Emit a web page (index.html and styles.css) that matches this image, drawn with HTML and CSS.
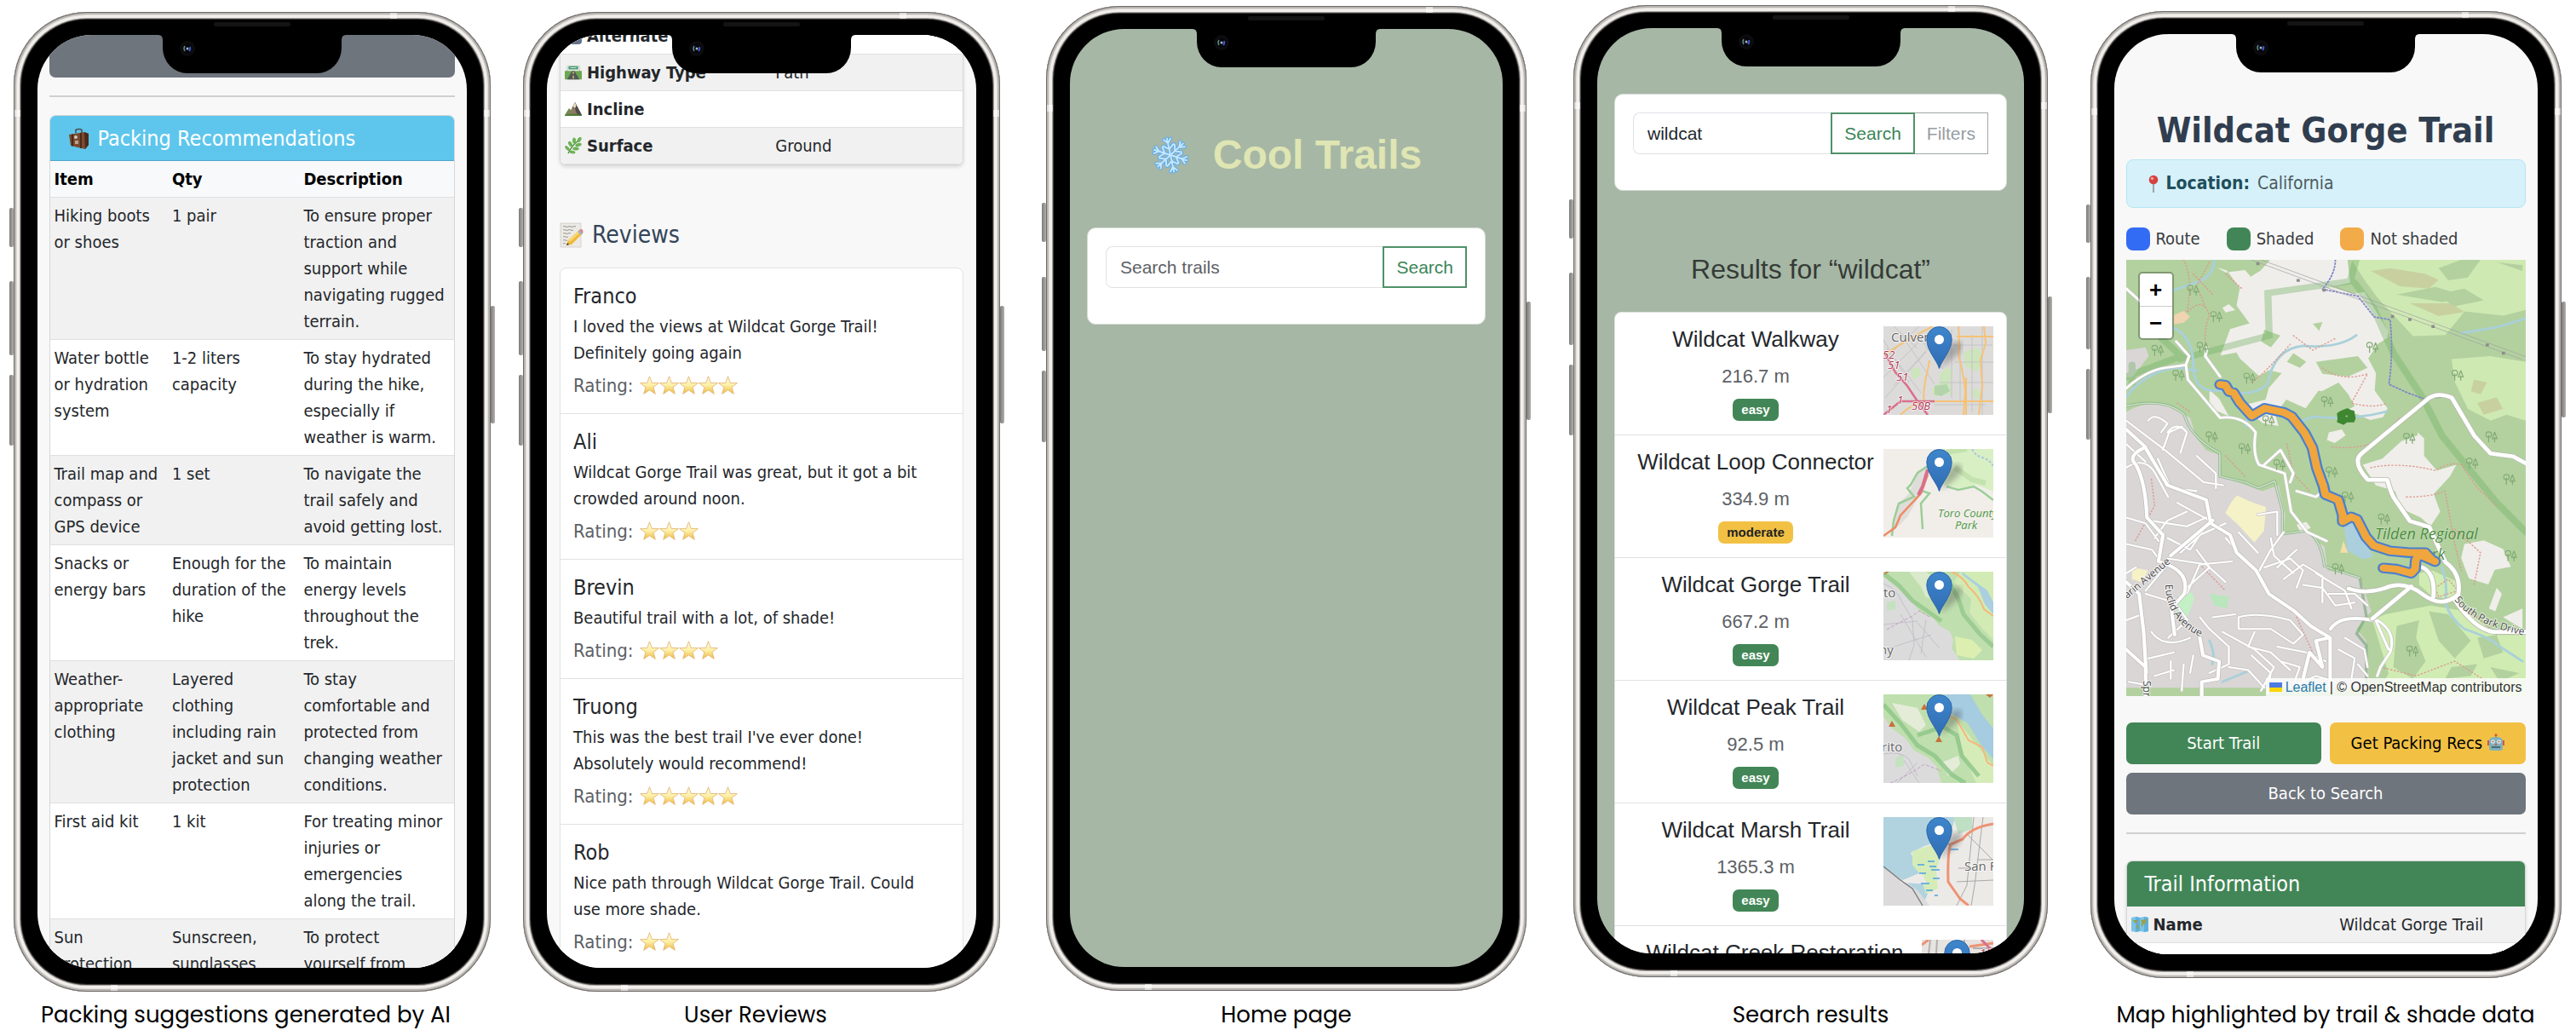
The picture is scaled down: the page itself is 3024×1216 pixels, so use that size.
FILE: index.html
```html
<!DOCTYPE html>
<html lang="en">
<head>
<meta charset="utf-8">
<meta name="viewport" content="width=device-width, initial-scale=1">
<title>Cool Trails – screens</title>
<link rel="stylesheet" href="styles.css">
</head>
<body>
<svg class="sprite" aria-hidden="true">
  <defs>
    <linearGradient id="gold" x1="0" y1="0" x2="0" y2="1"><stop offset="0" stop-color="#fffbe6"/><stop offset=".5" stop-color="#fdf0a8"/><stop offset="1" stop-color="#f0b83c"/></linearGradient>
    <linearGradient id="pinblue" x1="0" y1="0" x2="0" y2="1"><stop offset="0" stop-color="#3f86cb"/><stop offset="1" stop-color="#2f6cb4"/></linearGradient>
    <filter id="soft"><feGaussianBlur stdDeviation="3"/></filter>
  </defs>
  <symbol id="star" viewBox="0 0 24 24"><path d="M12 .8l2.900 8 8.500.2-6.700 5.100 2.400 8.200L12 17.600l-7.100 4.700 2.400-8.200L.6 9l8.500-.2z" fill="url(#gold)" stroke="#e2b473" stroke-width=".9" stroke-linejoin="round"/></symbol>
  <symbol id="pin" viewBox="0 0 44 50">
    <path d="M17 49 L24 27 Q34 14 42 20 Q43 29 33 36z" fill="#444" opacity=".35" filter="url(#soft)"/>
    <path d="M15.500 49.500C13 40 1 29 .8 15.500A14.700 15 0 0 1 30.200 15.500C30 29 18 40 15.500 49.500z" fill="url(#pinblue)" stroke="#2c65a8"/>
    <circle cx="15.500" cy="15.500" r="5.500" fill="#fff"/>
  </symbol>
  <symbol id="notch" viewBox="0 0 222 72">
    <path d="M0 27h1q5 0 5 6v9a29 30 0 0 0 29 30h152a29 30 0 0 0 29-30v-9q0-6 5-6h1V20H0z"/>
    <rect x="66" y="12" width="90" height="5" rx="2" fill="#141414"/>
    <circle cx="35" cy="43" r="9" fill="#0c0c0f"/><circle cx="35" cy="43" r="5.500" fill="#05070b"/>
    <path d="M32 40q-2 3 0 6" stroke="#5f8a86" stroke-width="1.500" fill="none"/><path d="M38 41q1 3-1 5" stroke="#3d55c0" stroke-width="2" fill="none"/><circle cx="35" cy="43" r="1.500" fill="#a9b6c4"/>
  </symbol>
  <symbol id="luggage" viewBox="0 0 26 26"><path d="M9 6V2.500Q13 .5 16 2.500V6" fill="none" stroke="#4c4a48" stroke-width="1.500"/><path d="M1 8l18-3 5 2v13l-4 5-17-4z" fill="#7a4a30"/><path d="M19 5l5 2v13l-4 5z" fill="#4b2a1b"/><path d="M5 7.500v14M15 6v18" stroke="#3c2116" stroke-width="1.500"/><rect x="7" y="9" width="4" height="4" rx="2" fill="#cfc9be"/><rect x="8" y="15" width="4" height="4" fill="#b9a48e"/></symbol>
  <symbol id="highway" viewBox="0 0 22 18"><path d="M0 7h22v11H0z" fill="#6aa84f"/><path d="M9.500 7h3L19 18H3z" fill="#54585a"/><path d="M11 8v3M11 13v4" stroke="#e8d56a" stroke-width="1.300"/><path d="M3 8V3h16v5" stroke="#8b8f8d" fill="none"/><rect x="2" y="0" width="18" height="6" fill="#d9ddd8"/><rect x="5" y="1" width="12" height="4" fill="#3f9a70"/><path d="M7 3h8" stroke="#dff3e8"/></symbol>
  <symbol id="mountain" viewBox="0 0 20 16"><path d="M0 15L5 7l4 5 2 4H0z" fill="#6f8a52"/><path d="M4 15L12 0l8 15z" fill="#8d7a62"/><path d="M12 0L9 6l3 1 1 4 2 4h5z" fill="#4f4b49"/><path d="M12 0l-2.500 5 2.500 2 1.500-3z" fill="#e9dcc2"/><path d="M0 15q10-3 20 0v1H0z" fill="#4d7a36"/></symbol>
  <symbol id="herb" viewBox="0 0 20 20"><path d="M4 19Q8 10 16 4" stroke="#4d8c3a" stroke-width="1.400" fill="none"/><g fill="#6db356"><ellipse cx="17" cy="3" rx="2" ry="3.500" transform="rotate(35 17 3)"/><ellipse cx="11" cy="4" rx="2" ry="3.500"/><ellipse cx="6.500" cy="8" rx="2" ry="3.500" transform="rotate(-30 6.500 8)"/><ellipse cx="3" cy="13" rx="1.800" ry="3.500" transform="rotate(-45 3 13)"/><ellipse cx="16" cy="9" rx="2" ry="3.800" transform="rotate(75 16 9)"/><ellipse cx="13" cy="13.500" rx="2" ry="3.800" transform="rotate(95 13 13.500)"/><ellipse cx="9" cy="17.500" rx="1.800" ry="3.500" transform="rotate(100 9 17.500)"/></g></symbol>
  <symbol id="abc" viewBox="0 0 20 20"><rect width="20" height="20" rx="4" fill="#62708a"/><path d="M5 13l3-7 3 7M6 11h4" stroke="#fff" stroke-width="1.500" fill="none"/></symbol>
  <symbol id="memo" viewBox="0 0 28 30"><path d="M1 1h24v28H1z" fill="#eceae5" stroke="#cfccc6" stroke-width=".8"/><path d="M4 5q2-1 3 0t3 0 3 0 3 0 3 0M4 9q2-1 3 0t3 0 3 0 3 0M4 13q2-1 3 0t3 0 3 0M4 17q2-1 3 0t3 0M4 21q2-1 3 0t2 0M4 25q1-1 3 0" stroke="#8a8883" stroke-width=".9" fill="none"/><path d="M8 27l2-6L23 9l4 4-13 13z" fill="#f0b93c"/><path d="M10 21L23 9l2 2-13 12z" fill="#f9d772"/><path d="M21 11l2.500-2.500 4 4L25 15z" fill="#9fb6c4"/><path d="M23 9q3-2 4 0t0 4z" fill="#e77d80"/><path d="M8 27l1-3 2 2z" fill="#333"/></symbol>
  <symbol id="snow" viewBox="0 0 46 46"><g transform="rotate(-12 23 23)"><g stroke="#5faae8" stroke-width="4" stroke-linecap="round" fill="none"><g id="arm"><path d="M23 22V3M23 9l-4-5M23 9l4-5M23 16l-6-5M23 16l6-5"/></g><use href="#arm" transform="rotate(60 23 23)"/><use href="#arm" transform="rotate(120 23 23)"/><use href="#arm" transform="rotate(180 23 23)"/><use href="#arm" transform="rotate(240 23 23)"/><use href="#arm" transform="rotate(300 23 23)"/></g><g stroke="#c3e6fd" stroke-width="2" stroke-linecap="round" fill="none"><g id="arm2"><path d="M23 22V3M23 9l-4-5M23 9l4-5M23 16l-6-5M23 16l6-5"/></g><use href="#arm2" transform="rotate(60 23 23)"/><use href="#arm2" transform="rotate(120 23 23)"/><use href="#arm2" transform="rotate(180 23 23)"/><use href="#arm2" transform="rotate(240 23 23)"/><use href="#arm2" transform="rotate(300 23 23)"/></g></g></symbol>
  <symbol id="pushpin" viewBox="0 0 12 22"><path d="M6 9v12" stroke="#8c9294" stroke-width="1.600"/><circle cx="6" cy="6" r="5.300" fill="#d5423f"/><circle cx="4.500" cy="4.500" r="1.800" fill="#f0a09c"/></symbol>
  <symbol id="robot" viewBox="0 0 20 20"><circle cx="10" cy="1.800" r="1.600" fill="#d9543f"/><path d="M10 3v3" stroke="#777"/><rect x="0" y="8" width="3" height="6" fill="#d9543f"/><rect x="17" y="8" width="3" height="6" fill="#d9543f"/><path d="M2 8q1-4 8-4t8 4v9q0 3-3 3H5q-3 0-3-3z" fill="#7fb0bb"/><circle cx="6.500" cy="9.500" r="2.300" fill="#dff6fb"/><circle cx="13.500" cy="9.500" r="2.300" fill="#dff6fb"/><circle cx="6.500" cy="9.500" r="1" fill="#c0503c"/><circle cx="13.500" cy="9.500" r="1" fill="#c0503c"/><path d="M10 11l-1.500 3h3z" fill="#c8563e"/><path d="M5 16h10" stroke="#35545c" stroke-width="2" stroke-dasharray="1.500 .6"/></symbol>
  <symbol id="world" viewBox="0 0 20 18"><path d="M0 1l5-1 5 1 5-1 5 1v16l-5 1-5-1-5 1-5-1z" fill="#7cc3e8"/><path d="M5 0l5 1v16l-5 1zM15 0l5 1v16l-5 1z" fill="#5fafdb"/><path d="M2 4h6l-2 4-2-1zM6 9l3 2-2 5zM11 4l7-1-1 5-4 1zM11 8h3l-1 5z" fill="#97a24b"/></symbol>
  <symbol id="tree" viewBox="0 0 36 40"><g fill="none" stroke="#84ab76" stroke-width="3"><circle cx="9" cy="11" r="8"/><path d="M9 14v20M26 4l-7 20h14zM26 20v14"/></g></symbol>
</svg>

<main class="showcase">

  <figure class="device device-packing">
    <div class="phone">
      <span class="key key-mute"></span><span class="key key-up"></span><span class="key key-down"></span><span class="key key-power"></span>
      <span class="band band-top"></span><span class="band band-left"></span><span class="band band-right"></span><span class="band band-bottom"></span>
      <section class="screen trail">
        <button class="btn btn-grey btn-tail" type="button" aria-label="Back to Search"></button>
        <hr>
        <div class="card">
          <h2 class="card-head head-info"><svg class="ico26"><use href="#luggage"/></svg>Packing Recommendations</h2>
          <table class="tbl tbl-pack">
            <colgroup><col class="c-item"><col class="c-qty"><col></colgroup>
            <thead><tr><th scope="col">Item</th><th scope="col">Qty</th><th scope="col">Description</th></tr></thead>
            <tbody>
              <tr><td>Hiking boots or shoes</td><td>1 pair</td><td>To ensure proper traction and support while navigating rugged terrain.</td></tr>
              <tr><td>Water bottle or hydration system</td><td>1-2 liters capacity</td><td>To stay hydrated during the hike, especially if weather is warm.</td></tr>
              <tr><td>Trail map and compass or GPS device</td><td>1 set</td><td>To navigate the trail safely and avoid getting lost.</td></tr>
              <tr><td>Snacks or energy bars</td><td>Enough for the duration of the hike</td><td>To maintain energy levels throughout the trek.</td></tr>
              <tr><td>Weather-appropriate clothing</td><td>Layered clothing including rain jacket and sun protection</td><td>To stay comfortable and protected from changing weather conditions.</td></tr>
              <tr><td>First aid kit</td><td>1 kit</td><td>For treating minor injuries or emergencies along the trail.</td></tr>
              <tr><td>Sun protection</td><td>Sunscreen, sunglasses</td><td>To protect<br>yourself from</td></tr>
            </tbody>
          </table>
        </div>
      </section>
      <svg class="notch"><use href="#notch"/></svg>
    </div>
    <figcaption>Packing suggestions generated by AI</figcaption>
  </figure>

  <figure class="device device-reviews">
    <div class="phone">
      <span class="key key-mute"></span><span class="key key-up"></span><span class="key key-down"></span><span class="key key-power"></span>
      <span class="band band-top"></span><span class="band band-left"></span><span class="band band-right"></span><span class="band band-bottom"></span>
      <section class="screen trail">
        <div class="card card-info scrolled">
          <table class="tbl tbl-info">
            <colgroup><col class="c-key"><col></colgroup>
            <tbody>
              <tr class="plain"><th scope="row"><svg class="ico20"><use href="#abc"/></svg>Alternate Name</th><td></td></tr>
              <tr class="tint"><th scope="row"><svg class="ico20"><use href="#highway"/></svg>Highway Type</th><td>Path</td></tr>
              <tr class="plain"><th scope="row"><svg class="ico20"><use href="#mountain"/></svg>Incline</th><td></td></tr>
              <tr class="tint"><th scope="row"><svg class="ico20"><use href="#herb"/></svg>Surface</th><td>Ground</td></tr>
            </tbody>
          </table>
        </div>
        <h2 class="reviews-title"><svg class="ico28"><use href="#memo"/></svg>Reviews</h2>
        <ul class="reviews">
          <li><h3>Franco</h3><p>I loved the views at Wildcat Gorge Trail! Definitely going again</p><div class="rating">Rating: <span class="stars" role="img" aria-label="5 stars"><svg><use href="#star"/></svg><svg><use href="#star"/></svg><svg><use href="#star"/></svg><svg><use href="#star"/></svg><svg><use href="#star"/></svg></span></div></li>
          <li><h3>Ali</h3><p>Wildcat Gorge Trail was great, but it got a bit crowded around noon.</p><div class="rating">Rating: <span class="stars" role="img" aria-label="3 stars"><svg><use href="#star"/></svg><svg><use href="#star"/></svg><svg><use href="#star"/></svg></span></div></li>
          <li><h3>Brevin</h3><p>Beautiful trail with a lot, of shade!</p><div class="rating">Rating: <span class="stars" role="img" aria-label="4 stars"><svg><use href="#star"/></svg><svg><use href="#star"/></svg><svg><use href="#star"/></svg><svg><use href="#star"/></svg></span></div></li>
          <li><h3>Truong</h3><p>This was the best trail I've ever done! Absolutely would recommend!</p><div class="rating">Rating: <span class="stars" role="img" aria-label="5 stars"><svg><use href="#star"/></svg><svg><use href="#star"/></svg><svg><use href="#star"/></svg><svg><use href="#star"/></svg><svg><use href="#star"/></svg></span></div></li>
          <li><h3>Rob</h3><p>Nice path through Wildcat Gorge Trail. Could use more shade.</p><div class="rating">Rating: <span class="stars" role="img" aria-label="2 stars"><svg><use href="#star"/></svg><svg><use href="#star"/></svg></span></div></li>
        </ul>
      </section>
      <svg class="notch"><use href="#notch"/></svg>
    </div>
    <figcaption>User Reviews</figcaption>
  </figure>

  <figure class="device device-home">
    <div class="phone">
      <span class="key key-mute"></span><span class="key key-up"></span><span class="key key-down"></span><span class="key key-power"></span>
      <span class="band band-top"></span><span class="band band-left"></span><span class="band band-right"></span><span class="band band-bottom"></span>
      <section class="screen finder">
        <h1 class="brand"><svg class="ico46"><use href="#snow"/></svg>Cool Trails</h1>
        <form class="search-card">
          <label class="sr-only" for="q-home">Search trails</label>
          <div class="group"><input id="q-home" type="text" placeholder="Search trails"><button class="gbtn gbtn-green" type="button">Search</button></div>
        </form>
      </section>
      <svg class="notch"><use href="#notch"/></svg>
    </div>
    <figcaption>Home page</figcaption>
  </figure>

  <figure class="device device-results">
    <div class="phone">
      <span class="key key-mute"></span><span class="key key-up"></span><span class="key key-down"></span><span class="key key-power"></span>
      <span class="band band-top"></span><span class="band band-left"></span><span class="band band-right"></span><span class="band band-bottom"></span>
      <section class="screen finder">
        <form class="search-card">
          <label class="sr-only" for="q-results">Search trails</label>
          <div class="group"><input id="q-results" type="text" value="wildcat"><button class="gbtn gbtn-green" type="button">Search</button><button class="gbtn gbtn-mute" type="button">Filters</button></div>
        </form>
        <h2 class="results-title">Results for “wildcat”</h2>
        <ul class="results">
          <li>
            <div class="hit"><h3>Wildcat Walkway</h3><p>216.7 m</p><span class="badge easy">easy</span></div>
            <svg class="thumb" viewBox="0 0 129 104">
              <rect width="129" height="104" fill="#dcdbda"/>
              <g fill="#cde5bb"><path d="M94 30l18-5 4 12-6 16-14-6zM66 56l10-8 6 6-4 10 2 16-20 2-4-8 10-8zM32 50l10-2 2 10-10 4zM104 76l6-4 4 10-8 4z"/></g>
              <path d="M60 70l14-2 4 8-10 6-8-2z" fill="#b3d3ab"/>
              <g stroke="#c4c4c6" fill="none"><path d="M0 40L42 0M0 60L56 4M12 70L60 18M2 84L50 30M20 8l40 60M4 26l40 52M40 10l30 40M0 16l30 50M70 0v30M80 4v80M68 22h60M84 42h45M104 10v90M66 66h63M60 92h60M90 20v70M116 0v104M12 0l28 26"/></g>
              <g stroke="#f6c277" stroke-width="2" fill="none"><path d="M0 34Q30 14 58 0M86 12h43M88 0q2 22 0 34 6 20 8 42l-2 28M118 0l2 20-6 20 2 30-4 34M50 60q-4 20-2 28M54 40q-2 14-5 22M54 88h75M20 104q14-14 30-16M97 60v44"/></g>
              <g stroke="#d9708a" stroke-width="2.500" fill="none"><path d="M2 32l12 22 14 16 12 18M20 88h40M0 104l20-16M40 88l12 16"/></g>
              <g class="map-label shield"><text x="-1" y="38">52</text><text x="5" y="50">51</text><text x="15" y="64">51</text><text x="16" y="91">1</text><text x="33" y="98">50B</text><text x="3" y="102">1</text></g>
              <text class="map-label place" x="9" y="18">Culver</text>
              <use href="#pin" x="50" y="0" width="44" height="50"/>
            </svg>
          </li>
          <li>
            <div class="hit"><h3>Wildcat Loop Connector</h3><p>334.9 m</p><span class="badge moderate">moderate</span></div>
            <svg class="thumb" viewBox="0 0 129 104">
              <rect width="129" height="104" fill="#f1eeea"/>
              <path d="M66 0h63v50l-20-8-18 4-22-4-8-20z" fill="#d8efc4"/><path d="M60 16L40 28l-10 24-14 14-8 34 20-20 18-32 8-20z" fill="#dfddda"/>
              <path d="M84 22l20 14 16 4M74 4l24-4" stroke="#b5d99e" stroke-width="6" opacity=".6" fill="none"/>
              <path d="M52 20L40 28l-8 14-4 4 8 10-18 8-6 20-2 18M42 48l12 4-10 12 2 30M74 44l14 4 18-4 10 6 13 10" stroke="#9bce97" stroke-width="2.500" fill="none"/>
              <path d="M52 30l-8 22-24 26-6 14-14 10" stroke="#ef8a66" stroke-width="2.500" fill="none"/><path d="M52 24l-6 20-5 10" stroke="#d9708a" stroke-width="4" fill="none"/>
              <path d="M104 0q4 8 12 10t13 10" stroke="#aac6dd" stroke-width="2" stroke-dasharray="3 2" fill="none"/>
              <g class="map-label park"><text x="64" y="80">Toro County</text><text x="84" y="94">Park</text></g>
              <use href="#pin" x="50" y="0" width="44" height="50"/>
            </svg>
          </li>
          <li>
            <div class="hit"><h3>Wildcat Gorge Trail</h3><p>667.2 m</p><span class="badge easy">easy</span></div>
            <svg class="thumb" viewBox="0 0 129 104">
              <rect width="129" height="104" fill="#bfdfae"/>
              <path d="M0 6l20 16 14 14 10 12 14 6 8 10 12 6 4 10-2 10 10 14H0z" fill="#dcdbdc"/>
              <path d="M90 0h39v80l-14-14-14-18 2-16-20-20z" fill="#d2eab4"/><path d="M30 0h20l20 16 8 14-8 6-20-6-6-12z" fill="#dbe9cd"/><path d="M84 76l20 4 12 12-10 10-20-4z" fill="#dcefb0"/>
              <path d="M0 2l18 14 16 18 20 14 14 10M78 14l10 18 6 18 20 24 15 14" stroke="#93c78b" stroke-width="5" fill="none" opacity=".8"/>
              <path d="M92 0l16 12 14 10 7 14v14l-10-12-8-20-18-14z" fill="#a9cfe0"/>
              <path d="M80 0q14 6 20 18 12 10 18 26l11 8" stroke="#f4b97a" stroke-width="2" fill="none"/>
              <path d="M0 14q16 6 22 22l12 20 2 30-6 18M0 62l40-4M20 50l30 50M6 90l50-16M40 60l26 30M50 56l-6 40" stroke="#c2c0c6" fill="none"/>
              <path d="M4 68q14-8 30-16l8-6 14 8" stroke="#c29bc9" stroke-dasharray="4 2" fill="none"/>
              <path d="M4 36l10-2v10l-10 2z" fill="#c4e2c0"/><path d="M0 4l3-4h4z" fill="#c9703c"/>
              <text class="map-label place" x="0" y="30">to</text><text class="map-label place" x="-5" y="97">ny</text>
              <use href="#pin" x="50" y="0" width="44" height="50"/>
            </svg>
          </li>
          <li>
            <div class="hit"><h3>Wildcat Peak Trail</h3><p>92.5 m</p><span class="badge easy">easy</span></div>
            <svg class="thumb" viewBox="0 0 129 104">
              <rect width="129" height="104" fill="#bfdfae"/>
              <path d="M0 26l10 14 16 12 10 14 16 8 10 10 6 20H0z" fill="#dcdbdc"/>
              <path d="M10 10l30 6 10 20-8 8-20-14zM68 80l20-8 2 10-14 14z" fill="#e4ecd8"/><path d="M86 30l43 54v20h-20l-16-34z" fill="#d6ecb8"/>
              <path d="M0 12l20 22 20 26 20 12 20 22 16 10M40 48l30-10 16 10 6 24 20 24" stroke="#8cc487" stroke-width="5" fill="none" opacity=".8"/>
              <path d="M72 0h30l14 24 13 16v36l-14-16-16-26-20-12z" fill="#a5cce0"/>
              <path d="M66 18l20 12 14 24 16 8 6 18 7 4" stroke="#f4b97a" stroke-width="2" fill="none"/>
              <path d="M0 70q20-4 30 6l10 20M12 60l30 44M40 80l-24 24" stroke="#c2c0c6" fill="none"/><path d="M14 74l10-2v12l-10 2z" fill="#c4e2c0"/>
              <path d="M8 104q20-8 40-22l20 8" stroke="#c29bc9" stroke-dasharray="4 2" fill="none"/>
              <g fill="#c9703c"><path d="M6 38l4-7 4 7zM44 18l4-7 4 7zM61 56l4-7 4 7zM120 0h9l-4 4z"/></g>
              <text class="map-label place" x="-2" y="67">rito</text>
              <use href="#pin" x="50" y="0" width="44" height="50"/>
            </svg>
          </li>
          <li>
            <div class="hit"><h3>Wildcat Marsh Trail</h3><p>1365.3 m</p><span class="badge easy">easy</span></div>
            <svg class="thumb" viewBox="0 0 129 104">
              <rect width="129" height="104" fill="#b0d3df"/>
              <path d="M84 0h45v104H46L52 90l-8-24-12-24 16-8 30-10z" fill="#eceae6"/><path d="M0 60l20 12 20 14 14 18H0z" fill="#dcdadb"/><path d="M34 40l26-8 8 10-6 22 2 20-14 6-8-24-8-10z" fill="#d6ecb8"/>
              <path d="M82 0h22v14l-16 6z" fill="#bfe0c4"/>
              <g stroke="#eeecea" stroke-width="1.500"><path d="M20 76l24-10 6 12z" fill="#eceae6"/></g>
              <path d="M40 56h8m4-4h8m-18 14h8m6-4h10m-22 16h10m4-6h8m-16 14h8m2 6h4m-10-34h8m14-26h6m-4 6h10" stroke="#4aa0e6" stroke-width="1.300"/>
              <path d="M0 58l20 16 14 10 12 20" stroke="#77777a" stroke-width="1.300" fill="none"/>
              <path d="M106 0l-6 60-2 20-12 24M117 0l-10 80-4 24M86 76l43-2M98 20l30 30M110 50h19M88 60h14" stroke="#a8a8a8" fill="none"/>
              <path d="M129 8q-26 4-36 18l-14 6q-4 10-3 44l14 20 10 8" stroke="#ee9274" stroke-width="3" fill="none"/>
              <text class="map-label place" x="95" y="63">San F</text>
              <use href="#pin" x="50" y="0" width="44" height="50"/>
            </svg>
          </li>
          <li>
            <div class="hit"><h3>Wildcat Creek Restoration<br>Trail</h3><p>402.1 m</p><span class="badge easy">easy</span></div>
            <svg class="thumb thumb-narrow" viewBox="0 0 84 104">
              <rect width="84" height="104" fill="#e6e3e0"/><path d="M10 0L4 50M18 0l-4 60M50 0v40M60 10h24" stroke="#b2b0ae" stroke-width="2"/><path d="M0 6l8-6M56 8l28-4" stroke="#ee9274" stroke-width="3"/><path d="M70 0l14 14" stroke="#d9708a" stroke-width="3"/>
              <text class="map-label shield" x="68" y="20">10</text>
              <use href="#pin" x="26" y="0" width="44" height="50"/>
            </svg>
          </li>
        </ul>
      </section>
      <svg class="notch"><use href="#notch"/></svg>
    </div>
    <figcaption>Search results</figcaption>
  </figure>

  <figure class="device device-detail">
    <div class="phone">
      <span class="key key-mute"></span><span class="key key-up"></span><span class="key key-down"></span><span class="key key-power"></span>
      <span class="band band-top"></span><span class="band band-left"></span><span class="band band-right"></span><span class="band band-bottom"></span>
      <section class="screen trail">
        <h1 class="trail-title">Wildcat Gorge Trail</h1>
        <p class="location"><svg class="pushpin"><use href="#pushpin"/></svg><strong>Location:</strong> California</p>
        <ul class="legend"><li><i class="sw sw-route"></i>Route</li><li><i class="sw sw-shade"></i>Shaded</li><li><i class="sw sw-sun"></i>Not shaded</li></ul>
        <div class="map">
          <svg viewBox="0 0 469 512" preserveAspectRatio="xMidYMid slice" role="img" aria-label="Trail map">
            <defs>
              <path id="lb-south" d="M385 399Q409 432 480 443"/><path id="lb-euclid" d="M46 381Q46 424 90 444"/><path id="lb-marin" d="M1 398L60 349"/><path id="lb-spr" d="M20 494V540"/>
            </defs>
            <g transform="scale(.3788 .3444) translate(-172 -12)" stroke-linejoin="round" stroke-linecap="round" fill="none">
              <rect x="172" y="12" width="1239" height="1490" fill="#b2d19f"/>
              <g fill="#f0eeea">
                <path d="M480 55l60-8 18 22 30-20 30-37h240l8 78-60 14 70 24 50-10 60 90-4 70-30 20-30 50 24 50-4 60 40 60-14 30-40 10-40-20-60-10-10-60-50-10-40 60-60-30-34 50 10 40-50-10-60-60 70-20 10-40 40-50-40-10-30 20-60-60-10-20-50 10 30-90 60-20-40-60 10-60-40-60-30-10z"/>
                <path d="M470 175l20-12 20 20-30 8zM800 600l40-10 12 20-34 26-24-10zM430 455l30 30 30 60-40-20-20-30zM700 915l30-10 14 20-30 18zM1075 600l20 20v60l40 50 60-20-20 40-50 60 20 60-30 50-30-30-60-30-20-60-60-20-40-70 60-20 60-60 50-20zM1220 980l60-12 60 30 24 60-50 10-20 50-60-20-24-70zM1320 1130l16 20-20 60-20-10zM1340 1230l60-30v70zM560 800l50 8 30 40-20 20z"/>
              </g>
              <g fill="#b2d19f"><path d="M600 250l50 20-30 40-30-20zM750 230l30-6-10 30zM760 360l130-20 30 40-60 30-80-10zM760 470l70-40 30 40 20 40-60 40-80-20zM690 330l40 30-20 20-40-20z"/></g>
              <path d="M870 12h541v250l-60 70-80-30-60 40-30 90 30 90-60-10-60-80-50-80-60-100-70-130z" fill="#b2d19f"/>
              <path d="M870 12h541v170l-70 20-120-14-60 80-100 4-110-130-40-60z" fill="#cfe9b3"/>
              <path d="M930 50l60-10 110 20 40 20-30 30-90-8zM1050 160l130 0 40 30-80 14z" fill="#c8d0a0"/>
              <path d="M1140 40l70-28h60l-40 60-60 10zM1130 130l90-20 60 40-90 20zM1010 130l120-26 110 36-90 16zM1320 20l80 10v20z" fill="#b2d19f"/>
              <path d="M1180 350l120-10 111 20v200l-60-20-50 20-70-40-40-90z" fill="#cfe9b3"/><path d="M1250 420l40 10-20 40-30-10zM1260 500l60-20 20 40-60 20z" fill="#c8d0a0"/>
              <!-- neighbourhood -->
              <path d="M172 530Q230 490 300 510l70 40 20 70 30 40 46 20-2 70 80 30 50 20 50-20 20 100-4 70 70-10 56 50 10 80 100 20 35 120-45 60 30 40 10 160H172z" fill="#dad6d6"/>
              <path d="M172 320l60-10 10 30-50 70-20 4z" fill="#dad6d6"/>
              <path d="M515 815l40 20 50 20-6 80-30 40-50-60-40-40 20-40z" fill="#f5f2c8"/><path d="M190 1060l50 10-20 40-30-10z" fill="#f5f2c8"/>
              <path d="M335 1150l40-4 8 20-20 60-34-10z" fill="#c4f0c6"/><path d="M430 1150l60 10-6 40-40-10z" fill="#b9e6bd"/><path d="M320 200l30-14 20 20-20 20-30 6z" fill="#f0d3b0"/>
              <!-- golf course -->
              <path d="M935 1240l40-20 140-30 110 20 100 80 86 0v212H945l40-80z" fill="#d0ecb2"/><path d="M1080 1080l40-10 80 40-10 60-70-10-40-40z" fill="#d0ecb2"/>
              <path d="M1010 1260l70-20-10 60 30 80-40 60-60-40zM1110 1210l60 10 70 90-50 60-50-60zM1260 1300l60-10 20 60-60 20zM1180 1400l80-10-20 40-80 10zM1300 1400l90 20-60 30z" fill="#b2d19f"/>
              <path d="M847 915l30-6 30 50 30 64-30 10-50-30z" fill="#abcfdc"/><path d="M845 970l14 40-24 0z" fill="#f3dfa6"/>
              <!-- park boundaries -->
              <g stroke="#6fb163" opacity=".38" stroke-width="22" stroke-linejoin="miter"><path d="M172 410l170-70-60-60M340 350l275-80-4-145 255-40 18-73M880 90l60 90 60 150 90 150 60 130 170 230 91 100M190 430l0-60"/></g>
              <path d="M172 510q120-30 180 30 20 80 110 130v80l80 20 40 20 50-24 24 100v80l70-10q50 20 60 120l110 40 20 130-30 60 30 40v170" stroke="#7ba77b" opacity=".65" stroke-width="9"/>
              <path d="M172 510q120-30 180 30 20 80 110 130v80l80 20 40 20 50-24 24 100v80l70-10q50 20 60 120l110 40" stroke="#cfe2cb" stroke-width="4"/>
              <!-- creeks -->
              <g stroke="#a9d0da" stroke-width="8"><path d="M320 115l80-30q40-20 46-70M320 245q60 30 60 130t100 80q80 30 130-20 20-120 110-130 110 10 165-36M172 480q60-90 160-100l60 10M720 560q30-20 70-10 110 4 190-22M1210 262l110-20 90-30M1150 1060q20 60 10 120 20 60 60 90 80 30 110 60l70 50M540 580l10-30M430 1310q20 50 8 80M470 1450l80-36"/></g>
              <!-- footpaths -->
              <g stroke="#dc9a91" stroke-width="4" stroke-dasharray="3 8"><path d="M350 12q30 60 10 180 50-60 70 10-20 50-10 120M380 60l60 70M430 20l-40 80 30 80M480 60l50 50M690 270l60 50 70-40M780 380q60 50 140 20-30 60-50 100 70 20 110 0M930 720q90-20 200 10 40-30 80-20l50 80 60 60M1040 820q80 0 120-20l30 180 20 90M810 650q100 10 150-30l60-70M330 500l40 30M670 640l20 100 50 60M480 680l60 70M1190 930l80 80-20 110M560 430q40-30 120-130M1240 1210l80 80M250 760l10 90-60 120M400 1050l80 90M700 1230l50 120-30 90M1130 1130l40-30 30 40-60 20zM960 1400l110 30 120-50 100 70M1000 1470l200-30 180 20"/></g>
              <path d="M820 12q0 50-40 100l110 24 50 70 50 10q10 120-4 220l60 30 50 20 50-6" stroke="#7f85c9" stroke-width="5" stroke-dasharray="4 7"/>
              <path d="M560 12l840 340M590 12l820 330" stroke="#a3a3a3" stroke-width="2"/><g fill="#8d8d8d"><path d="M575 20h10v10h-10zM700 77h10v10h-10zM780 110h10v10h-10zM992 200h10v10h-10zM1046 210h10v10h-10zM1118 234h10v10h-10zM1286 297h10v10h-10zM1336 325h10v10h-10z"/></g>
              <!-- minor streets -->
              <g stroke="#c8c4c4" stroke-width="10"><path id="streets" d="M172 560l120 100 120 110 60 10M240 560q20-30 60 10l-20 30M300 600q30-40 60 0l-20 70M285 660l20-60 40-20M390 680l60 60v50M270 690l40 100 80 10M172 720q60-40 90 20l40 80M172 890l60 20 40 60M172 640l60 60M240 900l120 20 60-30M260 960l40-60 60-30M172 980l80 20 40 60-60 80M340 1010l60-60 80-40M300 1030l120 20 60 60M330 840l100 60-60 100-70-40M390 1000l40 60-70 70M360 1150l40-100 100-10M580 1080l40-80 40-60M480 960l80 100M520 940l60 70M620 960l10 60 60 60M640 1060l60-60M600 1060l80-30 40 40-20 60M660 1100l60-50 60 40v90M720 1120l60 10 40 60 60-10M760 1080l90 60 20 60M800 1150l80 0 40 40M520 1230q60-20 160 10l40 50-30 30-70-50-100 0zM570 1280l-20 50 70 20 60 60M640 1330l90 20 60 30M470 1280l100 60 60 60-40 80M440 1230l70-10M400 1230l30 40 60 60v60l-60 30M490 1400l60 10 50 60M560 1360l60 60-10 70M650 1380l60 20-20 60M830 1340l50 30-10 70M850 1300l60 40 10 60M890 1390l30 40M700 1460l60-30 60 20M172 1240l50-20M232 1150l90 30 40 60-60 60M250 1280q40 60 120 20M240 1370l80-20M310 1380v60M350 1390l-6 90M380 1360l-10 60M180 1450l50 10M260 1430l60-20M172 1080l30-20M580 880l60-10v80"/></g>
              <use href="#streets" stroke="#fff" stroke-width="6"/>
              <g stroke="#c0bcbc" stroke-width="15"><path id="mains" d="M172 590l60 60q-60 30-30 60 30 60 34 180l50 60-14 90q100 30 80 110l-40 50 10 90M230 650l70 130 120 50 14 80 60 40 20 60 60 60 40 80 80 60 50 50 60 40v180M310 1020l130-120M172 1340l60 60v100M805 1270q30-50 130-30M400 1300l10 60 50 20-4 60-50 10v50M172 1110l40 40 14 130 8 140M800 1300l-40 10 20 90-40-50-20 90"/></g>
              <use href="#mains" stroke="#fff" stroke-width="11"/>
              <!-- park roads -->
              <g stroke="#c3c7bc" stroke-width="12"><path id="roads" d="M172 110l50 50M172 450q60-60 120-70l65-10 10-30-40-50M357 370l6 50 100 130q70-10 110 50-10 70 10 110l80 30 20 130 50 70 60 30M463 410l-46-70 6-30M600 710l50-50 40 80-10 30M700 800l60 20 20-20M985 1340l-40-100M950 1240q60 40 40 110l-30 50-10 30"/></g>
              <use href="#roads" stroke="#fff" stroke-width="8"/>
              <g stroke="#b9bfae" stroke-width="18"><path id="drive" d="M1411 706l-40-24-70-10-50-60-70-130q-40-20-70 0l-210 190q-30 30 20 90l60 0q10 40 20 60l50 80 60 20 50 120q50 40 40 110-50 50-110 0-60-50-120-20-60 20-110 0M935 1235l120-110M1090 1060q40 20 34 100M1190 1170q60 100 120 110l100 0"/></g>
              <use href="#drive" stroke="#fff" stroke-width="13"/>
              <g><use href="#tree" x="360" y="95" width="40" height="44"/><use href="#tree" x="432" y="185" width="40" height="44"/><use href="#tree" x="390" y="290" width="40" height="44"/><use href="#tree" x="535" y="395" width="40" height="44"/><use href="#tree" x="315" y="385" width="40" height="44"/><use href="#tree" x="418" y="595" width="40" height="44"/><use href="#tree" x="520" y="635" width="40" height="44"/><use href="#tree" x="594" y="540" width="40" height="44"/><use href="#tree" x="776" y="475" width="40" height="44"/><use href="#tree" x="916" y="290" width="40" height="44"/><use href="#tree" x="250" y="300" width="40" height="44"/><use href="#tree" x="628" y="690" width="40" height="44"/><use href="#tree" x="790" y="715" width="40" height="44"/><use href="#tree" x="952" y="875" width="40" height="44"/><use href="#tree" x="1030" y="600" width="40" height="44"/><use href="#tree" x="1180" y="385" width="40" height="44"/><use href="#tree" x="1285" y="595" width="40" height="44"/><use href="#tree" x="1340" y="740" width="40" height="44"/><use href="#tree" x="1225" y="685" width="40" height="44"/><use href="#tree" x="1345" y="1000" width="40" height="44"/><use href="#tree" x="1040" y="1325" width="40" height="44"/><use href="#tree" x="810" y="1045" width="40" height="44"/><use href="#tree" x="840" y="800" width="40" height="44"/></g>
              <path d="M845 525l12-5 12 6 8 2 4 24-4 12-22 0-10 8-18-8 2-10-2-18 8-6z" fill="#3f8731" stroke="#3f8731" stroke-width="4"/><circle cx="855" cy="545" r="3" fill="#a8d09a"/>
            </g>
            <g class="map-label tilden"><text x="292" y="328">Tilden Regional</text><text x="338" y="352">Park</text></g>
            <g class="map-label road"><text><textPath href="#lb-south">South Park Drive</textPath></text><text><textPath href="#lb-euclid">Euclid Avenue</textPath></text><text><textPath href="#lb-marin">arin Avenue</textPath></text><text><textPath href="#lb-spr">Spruce</textPath></text></g>
            <g transform="scale(.3788 .3444) translate(-172 -12)" stroke-linejoin="round" stroke-linecap="round" fill="none">
              <path d="M463 437l16 2 12 22 14 4 18 32 38 47 40-26 60 14 24 14 40 56 24 50 14 70 20 60 6 30 40 18 14 52 0 22 26-16 18 8 28 60 24 30 50 18 60 6 50 0 22 26 8 4-50-24-10 20-2 30-12 14-46-14-40-4" stroke="#4a7fd0" stroke-width="36"/>
              <path d="M463 437l16 2 12 22 14 4 18 32 38 47 40-26 60 14 24 14 40 56 24 50 14 70 20 60 6 30 40 18 14 52 0 22 26-16 18 8 28 60 24 30 50 18 60 6 50 0 22 26 8 4-50-24-10 20-2 30-12 14-46-14-40-4" stroke="#f0a63c" stroke-width="24"/>
            </g>
          </svg>
          <div class="zoom"><button type="button" aria-label="Zoom in">+</button><button type="button" aria-label="Zoom out">−</button></div>
          <div class="attribution"><svg class="flag" viewBox="0 0 15 11"><path d="M0 0h15v6H0z" fill="#4c7be1"/><path d="M0 6h15v5H0z" fill="#ffd500"/></svg><a href="#leaflet">Leaflet</a> | © OpenStreetMap contributors</div>
        </div>
        <div class="actions"><button class="btn btn-green" type="button">Start Trail</button><button class="btn btn-yellow" type="button">Get Packing Recs <svg class="ico20"><use href="#robot"/></svg></button><button class="btn btn-grey wide" type="button">Back to Search</button></div>
        <hr>
        <div class="card card-trail">
          <h2 class="card-head head-green">Trail Information</h2>
          <table class="tbl tbl-info">
            <colgroup><col class="c-key"><col></colgroup>
            <tbody>
              <tr class="tint"><th scope="row"><svg class="ico20"><use href="#world"/></svg>Name</th><td>Wildcat Gorge Trail</td></tr>
              <tr class="plain"><th scope="row"><svg class="ico20"><use href="#abc"/></svg>Alternate Name</th><td></td></tr>
            </tbody>
          </table>
        </div>
      </section>
      <svg class="notch"><use href="#notch"/></svg>
    </div>
    <figcaption>Map highlighted by trail &amp; shade data</figcaption>
  </figure>

</main>
</body>
</html>
```
FILE: styles.css
```css
:root {
  --tahoma: "DejaVu Sans Condensed", "Noto Sans", sans-serif;
  --arial: "Liberation Sans", Arial, sans-serif;
  --green: #428657;
  --yellow: #f2c144;
  --grey: #6f757d;
  --line: #dee0e2;
  --ink: #24272b;
}

* { box-sizing: border-box; }

body { margin: 0; background: #fff; color: var(--ink); }

h1, h2, h3, p, ul, figure { margin: 0; padding: 0; }
ul { list-style: none; }

.sprite { position: absolute; width: 0; height: 0; }
.sr-only { position: absolute; width: 1px; height: 1px; overflow: hidden; clip-path: inset(50%); }

/* row of devices */
.showcase {
  display: grid;
  grid-template-columns: minmax(0, 575fr) minmax(0, 622fr) minmax(0, 610fr) minmax(0, 621fr) minmax(0, 588fr);
  grid-template-rows: auto auto;
  padding: 0 0 6px 8px;
}
.device { display: grid; grid-row: span 2; grid-template-rows: subgrid; justify-items: center; }
figcaption { margin-top: 9px; font: 400 26px/36px Poppins, Inter, sans-serif; color: #000; text-align: center; }
.device-packing figcaption, .device-reviews figcaption { padding-right: 14px; }

.phone {
  position: relative;
  display: grid;
  grid-template-rows: minmax(0, 1fr);
  align-self: start;
  width: 100%;
  min-height: 0;
  padding: 27px 28px 28px;
  border-radius: 86px;
  background: #000;
  box-shadow: inset 0 0 0 1px #6d6b6a, inset 0 0 0 3px #b9b6b2, inset 0 0 0 4px #e3e0db, inset 0 0 0 7px #f1efec, inset 0 0 0 8px #a3a09d, inset 0 0 1px 9px #454341;
}
.device-packing .phone, .device-reviews .phone { max-width: 560px; aspect-ratio: 560 / 1150; margin-top: 14px; }
.device-home .phone { max-width: 564px; aspect-ratio: 564 / 1156; margin-top: 7px; }
.device-results .phone { max-width: 557px; aspect-ratio: 557 / 1141; margin-top: 6px; }
.device-detail .phone { max-width: 553px; aspect-ratio: 553 / 1135; margin-top: 13px; }

.screen { border-radius: 64px; overflow: hidden; min-width: 0; }
.notch { position: absolute; top: 0; left: 50%; width: 222px; height: 72px; margin-left: -111px; }

.key { position: absolute; width: 5px; border-radius: 2px; background: linear-gradient(90deg, #7d7b79, #b3b1ae); }
.key-mute { left: -5px; top: 20%; height: 4%; }
.key-up { left: -5px; top: 27.500%; height: 7.500%; }
.key-down { left: -5px; top: 37%; height: 7.300%; }
.key-power { right: -5px; top: 30%; height: 12%; }
.band { position: absolute; background: #fff; opacity: .55; }
.band-top { top: 1px; left: 79%; width: 8px; height: 7px; }
.band-left { left: 1px; top: 10%; width: 7px; height: 8px; }
.band-right { right: 1px; top: 10%; width: 7px; height: 8px; }
.band-bottom { bottom: 1px; left: 20.500%; width: 8px; height: 7px; }

.ico20 { width: 20px; height: 20px; }
.ico26 { width: 26px; height: 26px; }
.ico28 { width: 28px; height: 30px; }
.ico46 { width: 46px; height: 46px; }

/* trail pages */
.trail { padding: 0 15px; background: #f8f8f8; font: 20px/31px var(--tahoma); }
.device-packing .trail, .device-detail .trail { padding: 0 14px; }
.trail hr { margin: 21px 0; border: 0; border-top: 2px solid #cfd0d1; }

.btn { height: 49px; border: 0; border-radius: 7px; padding: 0 12px; font: 20px/31px var(--tahoma); color: #fff; }
.btn-grey { background: var(--grey); }
.btn-green { background: var(--green); }
.btn-yellow { background: var(--yellow); color: #000; }
.btn-yellow svg { vertical-align: -2px; }
.btn-tail { display: block; width: 100%; height: 50px; border-radius: 0 0 7px 7px; }

.card { border: 1px solid #d5d7d9; border-radius: 7px; background: #fff; overflow: hidden; }
.card-head { display: flex; align-items: center; gap: 9px; padding: 11px 21px; font-size: 25px; line-height: 31px; font-weight: 400; color: #fff; }
.head-info { padding-bottom: 10px; background: #5ec6ec; border-bottom: 1px solid #50a9ca; }
.head-green { background: var(--green); }

.tbl { width: 100%; border-collapse: collapse; table-layout: fixed; }
.tbl th, .tbl td { padding: 6px 5px 5px; border-bottom: 1px solid var(--line); text-align: left; vertical-align: top; }
.tbl-pack thead th { background: #f8f9fb; color: #000; }
.tbl-pack tbody tr:nth-child(odd) { background: #f1f1f1; }
.c-item { width: 29.200%; }
.c-qty { width: 32.600%; }
.c-key { width: 52.400%; }
.tint { background: #f1f1f1; }
.plain { background: #fff; }
.tbl-info svg { margin-right: 6px; vertical-align: -3px; }
.card-info, .card-trail { box-shadow: 0 2px 4px #0002; }
.scrolled { margin-top: -21px; }

.reviews-title { display: flex; align-items: center; gap: 10px; margin: 65px 0 21px; font-size: 28px; line-height: 34px; font-weight: 400; color: #34455a; }
.reviews { border: 1px solid #dfe2e6; border-radius: 8px; background: #fff; }
.reviews li { padding: 17px 15px; border-bottom: 1px solid #dfe2e6; }
.reviews h3 { margin-bottom: 5px; font-size: 25px; line-height: 31px; font-weight: 400; }
.reviews p { margin-bottom: 7px; padding-right: 12px; }
.rating { display: flex; align-items: center; gap: 8px; font-size: 22px; line-height: 31px; color: #5d6166; }
.stars { display: flex; }
.stars svg { width: 23px; height: 23px; }

.trail-title { margin-top: 88px; font-size: 41px; line-height: 50px; color: #303e50; text-align: center; }
.location { margin-top: 9px; padding: 12px 25px; display: flex; align-items: center; gap: 9px; border: 1px solid #b5e6f2; border-radius: 8px; background: #d6f1fa; font-size: 21px; color: #4d5c62; }
.location strong { color: #1f4f5c; }
.pushpin { width: 12px; height: 22px; }
.legend { display: flex; gap: 31px; margin: 21px 0 9px; color: #383b3e; }
.legend li { display: flex; align-items: center; gap: 7px; }
.sw { width: 28px; height: 27px; border-radius: 8px; }
.sw-route { background: #336cf4; }
.sw-shade { background: var(--green); }
.sw-sun { background: #f2ab48; }

.map { position: relative; aspect-ratio: 469 / 512; }
.map > svg { display: block; width: 100%; height: 100%; }
.zoom { position: absolute; top: 14px; left: 14px; display: grid; border: 2px solid #0004; border-radius: 5px; background: #fff; background-clip: padding-box; }
.zoom button { width: 38px; height: 38px; padding: 0; border: 0; background: none; font: bold 26px/38px var(--arial); color: #000; }
.zoom button + button { border-top: 1px solid #ccc; }
.attribution { position: absolute; right: 0; bottom: 0; display: flex; align-items: center; gap: 4px; padding: 0 4px; background: #fffc; font: 16px/21px var(--arial); color: #333; white-space: nowrap; }
.attribution a { color: #2a7bab; text-decoration: none; }
.flag { width: 15px; height: 11px; }

.map-label { font-family: "Open Sans", "Noto Sans", sans-serif; paint-order: stroke; stroke-linejoin: round; }
.tilden { font-size: 18px; font-style: italic; fill: #4b8a3e; stroke: #fff6; stroke-width: 1px; }
.road { font-size: 12px; fill: #4a4a4a; stroke: #fffa; stroke-width: 2px; }
.place { font-size: 15px; fill: #666; stroke: #fffa; stroke-width: 2px; }
.park { font-size: 13px; font-style: italic; fill: #4f9a48; }
.shield { font-size: 13px; font-style: italic; fill: #b23a56; stroke: #fffa; stroke-width: 2px; }

.actions { display: grid; grid-template-columns: 1fr 1fr; gap: 10px; margin-top: 31px; }
.wide { grid-column: 1 / -1; }
.card-trail { margin-top: 31px; }

/* finder pages */
.finder { padding: 0 20px; background: #a6b7a5; font: 21px/31px var(--arial); }
.brand { display: flex; justify-content: center; align-items: center; gap: 27px; margin-top: 118px; font-size: 48px; line-height: 60px; color: #dfe5b3; }
.search-card { padding: 21px 21px 42px; border: 1px solid #d5ddd5; border-radius: 10px; background: #fff; }
.device-home .search-card { margin-top: 55px; }
.device-results .search-card { margin-top: 77px; }
.group { display: flex; }
.group input { flex: 1; min-width: 0; height: 49px; padding: 0 16px; border: 1px solid #dfe2e6; border-right: 0; border-radius: 8px 0 0 8px; background: #fff; font: 21px/31px var(--arial); color: var(--ink); }
.group input::placeholder { color: #5d6166; opacity: 1; }
.gbtn { height: 49px; padding: 0 14px; border: 1px solid; background: #fff; font: 21px/31px var(--arial); }
.gbtn-green { border: 2px solid #4f9168; color: #3b8557; }
.gbtn-mute { border-left: 0; border-color: #9fa8a6; color: #969da2; }

.results-title { margin: 72px 0 30px; font-size: 32px; line-height: 40px; font-weight: 400; color: #353b37; text-align: center; }
.results { border: 1px solid #dfe3e0; border-radius: 8px; background: #fff; overflow: hidden; }
.results li { display: flex; align-items: flex-start; padding: 16px 15px; border-bottom: 1px solid #dfe1e4; }
.hit { flex: 1; text-align: center; }
.hit h3 { font-size: 26px; line-height: 31px; font-weight: 400; }
.hit p { margin: 12px 0 11px; font-size: 22px; line-height: 31px; color: #5d6166; }
.badge { display: block; width: fit-content; margin: 0 auto; padding: 0 10px; border-radius: 7px; font: bold 15px/26px var(--arial); }
.easy { background: var(--green); color: #fff; }
.moderate { background: var(--yellow); color: #222; }
.thumb { flex: none; width: 129px; height: 104px; }
.thumb-narrow { width: 84px; }
```
